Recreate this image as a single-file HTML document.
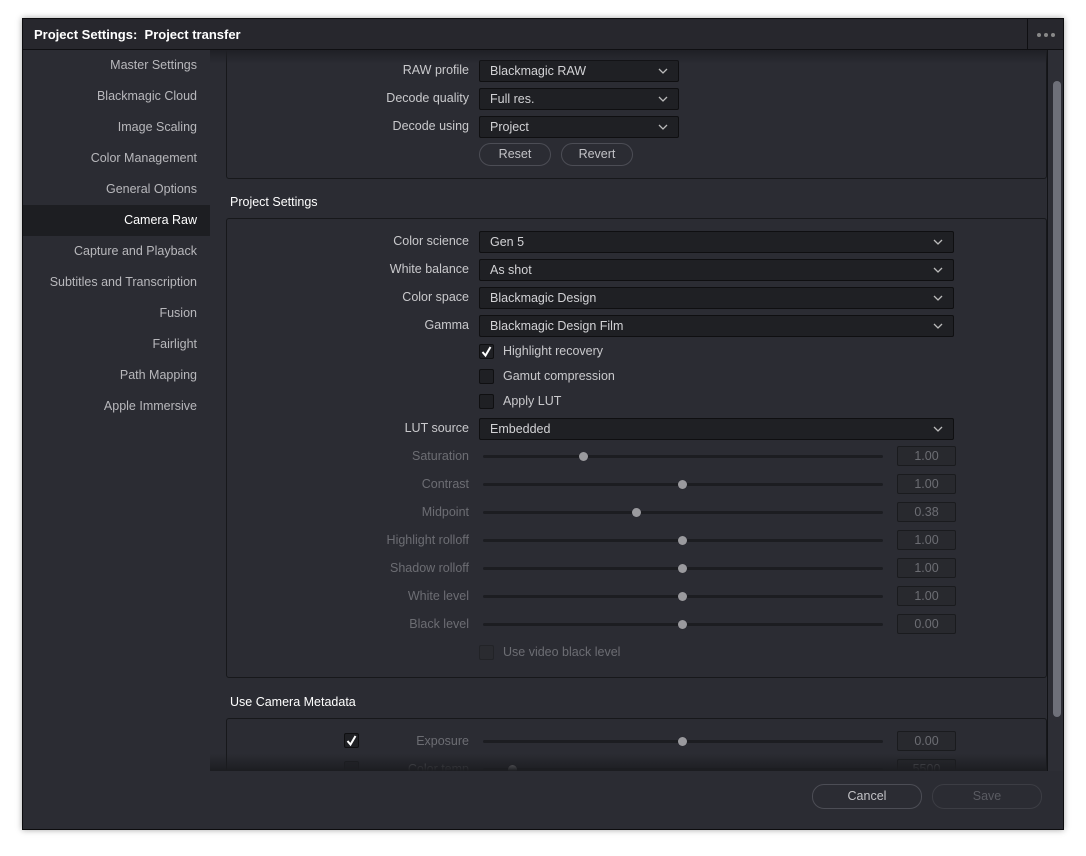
<!DOCTYPE html>
<html><head><meta charset="utf-8"><style>
*{margin:0;padding:0;box-sizing:border-box}
html,body{width:1086px;height:856px;overflow:hidden}
body{background:#fff;font-family:"Liberation Sans",sans-serif;font-size:12.5px;color:#c9c9cc;position:relative}
.win{position:absolute;left:22px;top:18px;width:1042px;height:812px;background:#2b2c33;border:1px solid #0c0c0e;box-shadow:0 0 6px rgba(0,0,0,.35);overflow:hidden}
.a{position:absolute}
.title{left:0;top:0;width:1040px;height:31px;background:#27272d;border-bottom:1px solid #0f0f12;color:#fff;font-weight:bold;font-size:13px;line-height:31px;padding-left:11px}
.dots{left:1004px;top:0;width:36px;height:31px;border-left:1px solid #0f0f12}
.dots i{position:absolute;top:14px;width:4px;height:4px;border-radius:2px;background:#888}
.side{left:0;top:31px;width:187px;height:780px;background:#2b2c33}
.si{position:absolute;left:0;width:187px;height:31px;line-height:31px;text-align:right;padding-right:13px;color:#b8b8bc}
.si.sel{background:#1d1e22;color:#fff}
.lbl{position:absolute;width:300px;text-align:right;line-height:22px}
.dim{color:#6c6d73}
.dd{position:absolute;height:22px;background:#1f2024;border:1px solid #0f0f11;border-radius:2px;line-height:20px;padding-left:10px;color:#d2d2d5}
.dd svg{position:absolute;right:10px;top:7px}
.pan{position:absolute;left:203px;width:821px;border:1px solid #17181b;border-radius:3px;background:#2b2c33}
.hd{position:absolute;left:207px;color:#fff;font-size:12.5px}
.btn{position:absolute;height:23px;border:1px solid #4c4d55;border-radius:12px;text-align:center;line-height:21px;color:#c2c2c6}
.cb{position:absolute;width:15px;height:15px;background:#1f2024;border:1px solid #0f0f11;border-radius:2px}
.cbl{position:absolute;line-height:15px}
.tr{position:absolute;left:460px;width:400px;height:3px;background:#1c1d21;border-radius:2px}
.kn{position:absolute;width:9px;height:9px;border-radius:5px;background:#9a9a9e}
.vb{position:absolute;left:874px;width:59px;height:20px;background:#28292e;border:1px solid #1a1b1e;border-radius:2px;text-align:center;line-height:18px;color:#6c6d73}
</style></head><body>
<div class="win">
<div class="a title">Project Settings:&nbsp; Project transfer</div>
<div class="a dots"><i style="left:9px"></i><i style="left:16px"></i><i style="left:23px"></i></div>
<div class="a side">
<div class="si" style="top:0">Master Settings</div>
<div class="si" style="top:31px">Blackmagic Cloud</div>
<div class="si" style="top:62px">Image Scaling</div>
<div class="si" style="top:93px">Color Management</div>
<div class="si" style="top:124px">General Options</div>
<div class="si sel" style="top:155px">Camera Raw</div>
<div class="si" style="top:186px">Capture and Playback</div>
<div class="si" style="top:217px">Subtitles and Transcription</div>
<div class="si" style="top:248px">Fusion</div>
<div class="si" style="top:279px">Fairlight</div>
<div class="si" style="top:310px">Path Mapping</div>
<div class="si" style="top:341px">Apple Immersive</div>
</div>
<div class="a" style="left:187px;top:31px;width:837px;height:721px;overflow:hidden">
<div style="position:absolute;left:-187px;top:-49px;width:1024px;height:770px">
<div class="pan" style="top:30px;height:148px"></div>
<div class="lbl" style="left:146px;top:58px">RAW profile</div>
<div class="lbl" style="left:146px;top:86px">Decode quality</div>
<div class="lbl" style="left:146px;top:114px">Decode using</div>
<div class="dd" style="left:456px;top:59px;width:200px">Blackmagic RAW<svg width="10" height="6"><path d="M1 1l4 4 4-4" stroke="#bbb" fill="none" stroke-width="1.3"/></svg></div>
<div class="dd" style="left:456px;top:87px;width:200px">Full res.<svg width="10" height="6"><path d="M1 1l4 4 4-4" stroke="#bbb" fill="none" stroke-width="1.3"/></svg></div>
<div class="dd" style="left:456px;top:115px;width:200px">Project<svg width="10" height="6"><path d="M1 1l4 4 4-4" stroke="#bbb" fill="none" stroke-width="1.3"/></svg></div>
<div class="btn" style="left:456px;top:142px;width:72px">Reset</div>
<div class="btn" style="left:538px;top:142px;width:72px">Revert</div>

<div class="hd" style="top:194px">Project Settings</div>
<div class="pan" style="top:217px;height:460px"></div>
<div class="lbl" style="left:146px;top:229px">Color science</div>
<div class="lbl" style="left:146px;top:257px">White balance</div>
<div class="lbl" style="left:146px;top:285px">Color space</div>
<div class="lbl" style="left:146px;top:313px">Gamma</div>
<div class="dd" style="left:456px;top:230px;width:475px">Gen 5<svg width="10" height="6"><path d="M1 1l4 4 4-4" stroke="#bbb" fill="none" stroke-width="1.3"/></svg></div>
<div class="dd" style="left:456px;top:258px;width:475px">As shot<svg width="10" height="6"><path d="M1 1l4 4 4-4" stroke="#bbb" fill="none" stroke-width="1.3"/></svg></div>
<div class="dd" style="left:456px;top:286px;width:475px">Blackmagic Design<svg width="10" height="6"><path d="M1 1l4 4 4-4" stroke="#bbb" fill="none" stroke-width="1.3"/></svg></div>
<div class="dd" style="left:456px;top:314px;width:475px">Blackmagic Design Film<svg width="10" height="6"><path d="M1 1l4 4 4-4" stroke="#bbb" fill="none" stroke-width="1.3"/></svg></div>
<div class="cb" style="left:456px;top:343px"><svg width="13" height="13" style="position:absolute;left:0;top:0"><path d="M2.5 7l3 3.5L10.5 2" stroke="#fff" fill="none" stroke-width="2"/></svg></div>
<div class="cbl" style="left:480px;top:343px">Highlight recovery</div>
<div class="cb" style="left:456px;top:368px"></div>
<div class="cbl" style="left:480px;top:368px">Gamut compression</div>
<div class="cb" style="left:456px;top:393px"></div>
<div class="cbl" style="left:480px;top:393px">Apply LUT</div>
<div class="lbl" style="left:146px;top:416px">LUT source</div>
<div class="dd" style="left:456px;top:417px;width:475px">Embedded<svg width="10" height="6"><path d="M1 1l4 4 4-4" stroke="#bbb" fill="none" stroke-width="1.3"/></svg></div>

<div class="lbl dim" style="left:146px;top:444px">Saturation</div><div class="tr" style="top:454px"></div><div class="kn" style="left:556px;top:451px"></div><div class="vb" style="top:445px">1.00</div>
<div class="lbl dim" style="left:146px;top:472px">Contrast</div><div class="tr" style="top:482px"></div><div class="kn" style="left:655px;top:479px"></div><div class="vb" style="top:473px">1.00</div>
<div class="lbl dim" style="left:146px;top:500px">Midpoint</div><div class="tr" style="top:510px"></div><div class="kn" style="left:609px;top:507px"></div><div class="vb" style="top:501px">0.38</div>
<div class="lbl dim" style="left:146px;top:528px">Highlight rolloff</div><div class="tr" style="top:538px"></div><div class="kn" style="left:655px;top:535px"></div><div class="vb" style="top:529px">1.00</div>
<div class="lbl dim" style="left:146px;top:556px">Shadow rolloff</div><div class="tr" style="top:566px"></div><div class="kn" style="left:655px;top:563px"></div><div class="vb" style="top:557px">1.00</div>
<div class="lbl dim" style="left:146px;top:584px">White level</div><div class="tr" style="top:594px"></div><div class="kn" style="left:655px;top:591px"></div><div class="vb" style="top:585px">1.00</div>
<div class="lbl dim" style="left:146px;top:612px">Black level</div><div class="tr" style="top:622px"></div><div class="kn" style="left:655px;top:619px"></div><div class="vb" style="top:613px">0.00</div>
<div class="cb" style="left:456px;top:644px;background:#2a2b30;border-color:#222327"></div>
<div class="cbl dim" style="left:480px;top:644px">Use video black level</div>

<div class="hd" style="top:694px">Use Camera Metadata</div>
<div class="pan" style="top:717px;height:120px"></div>
<div class="cb" style="left:321px;top:732px"><svg width="13" height="13" style="position:absolute;left:0;top:0"><path d="M2.5 7l3 3.5L10.5 2" stroke="#fff" fill="none" stroke-width="2"/></svg></div>
<div class="lbl dim" style="left:146px;top:729px">Exposure</div><div class="tr" style="top:739px"></div><div class="kn" style="left:655px;top:736px"></div><div class="vb" style="top:730px">0.00</div>
<div class="cb" style="left:321px;top:760px;opacity:.5"></div>
<div class="lbl dim" style="left:146px;top:757px">Color temp</div><div class="tr" style="top:767px"></div><div class="kn" style="left:485px;top:764px"></div><div class="vb" style="top:758px">5500</div>
</div>
<div style="position:absolute;left:0;top:0;width:837px;height:14px;background:linear-gradient(#1f2025,rgba(43,44,51,0))"></div>
<div style="position:absolute;left:0;top:704px;width:837px;height:17px;background:linear-gradient(rgba(30,31,35,0),#1c1d21)"></div>
</div>
<div class="a" style="left:1024px;top:31px;width:16px;height:721px;background:#2d2e35;border-left:1px solid #121316"></div>
<div class="a" style="left:1030px;top:62px;width:8px;height:636px;background:#6e7079;border-radius:4px"></div>
<div class="btn" style="left:789px;top:765px;width:110px;height:25px;line-height:23px">Cancel</div>
<div class="btn" style="left:909px;top:765px;width:110px;height:25px;line-height:23px;color:#5a5b62;border-color:#3c3d44">Save</div>
</div>
</body></html>
